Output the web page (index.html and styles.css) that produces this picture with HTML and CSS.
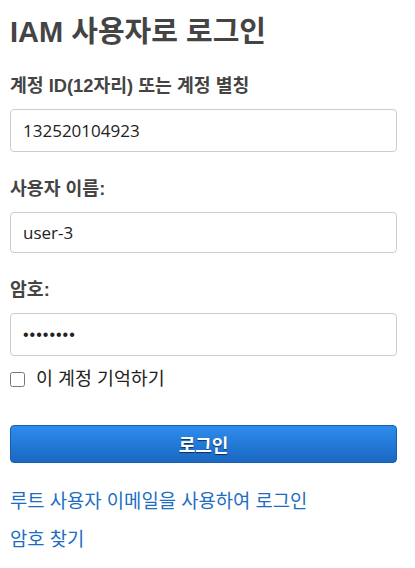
FILE: index.html
```html
<!DOCTYPE html>
<html lang="ko">
<head>
<meta charset="utf-8">
<link rel="stylesheet" href="styles.css">
</head>
<body>
<main class="page">
  <h1 class="title">IAM 사용자로 로그인</h1>
  <form class="form">
    <div class="field">
      <label class="label">계정 ID(12자리) 또는 계정 별칭</label>
      <input class="input" type="text" value="132520104923">
    </div>
    <div class="field">
      <label class="label">사용자 이름:</label>
      <input class="input input-short" type="text" value="user-3">
    </div>
    <div class="field">
      <label class="label">암호:</label>
      <input class="input input-pw" type="password" value="password">
    </div>
    <label class="remember"><input class="check" type="checkbox"><span>이 계정 기억하기</span></label>
    <button class="btn" type="button">로그인</button>
  </form>
  <div class="links">
    <a class="link" href="#">루트 사용자 이메일을 사용하여 로그인</a>
    <a class="link" href="#">암호 찾기</a>
  </div>
</main>
</body>
</html>
```
FILE: styles.css
```css
html, body {
  margin: 0;
  padding: 0;
  background: #fff;
}
body {
  font-family: "Liberation Sans", "Noto Sans CJK KR", sans-serif;
  color: #444;
}
.page {
  padding: 0 18px 0 10px;
}
.title {
  margin: 14px 0 0;
  font-size: 29px;
  line-height: 36px;
  font-weight: 700;
  color: #444;
}
.form {
  display: flex;
  flex-direction: column;
}
.field {
  display: flex;
  flex-direction: column;
}
.label {
  font-size: 18.3px;
  font-weight: 700;
  line-height: 24px;
  color: #444;
  margin-top: 25px;
  margin-bottom: 11px;
}
.field:first-child .label {
  margin-top: 24px;
}
.input {
  box-sizing: border-box;
  height: 43px;
  width: 100%;
  border: 1px solid #ccc;
  border-radius: 4px;
  padding: 0 12px;
  font-family: "Open Sans", "Noto Sans", sans-serif;
  font-size: 17px;
  color: #222;
  margin: 0;
  outline: none;
}
.input-short {
  height: 41px;
}
.input-pw {
  font-family: "Liberation Sans", sans-serif;
  font-size: 16px;
  letter-spacing: 1px;
}
.remember {
  display: flex;
  align-items: center;
  gap: 11px;
  margin-top: 11px;
  font-size: 18.4px;
  line-height: 24px;
  color: #222;
}
.check {
  margin: 0;
  width: 15px;
  height: 15px;
}
.btn {
  margin-top: 34px;
  height: 38px;
  width: 100%;
  border: 1px solid #1b5cab;
  border-radius: 4px;
  background: linear-gradient(to bottom, #2e8ced, #1a68c2);
  color: #fff;
  font-family: "Liberation Sans", "Noto Sans CJK KR", sans-serif;
  font-size: 18px;
  font-weight: 700;
  text-shadow: 0 1px 1px rgba(0, 0, 0, 0.6);
  padding: 0;
}
.links {
  display: flex;
  flex-direction: column;
  gap: 14px;
  margin-top: 27px;
}
.link {
  font-size: 18.8px;
  line-height: 24px;
  color: #1d6ec2;
  text-decoration: none;
  align-self: flex-start;
}
```
